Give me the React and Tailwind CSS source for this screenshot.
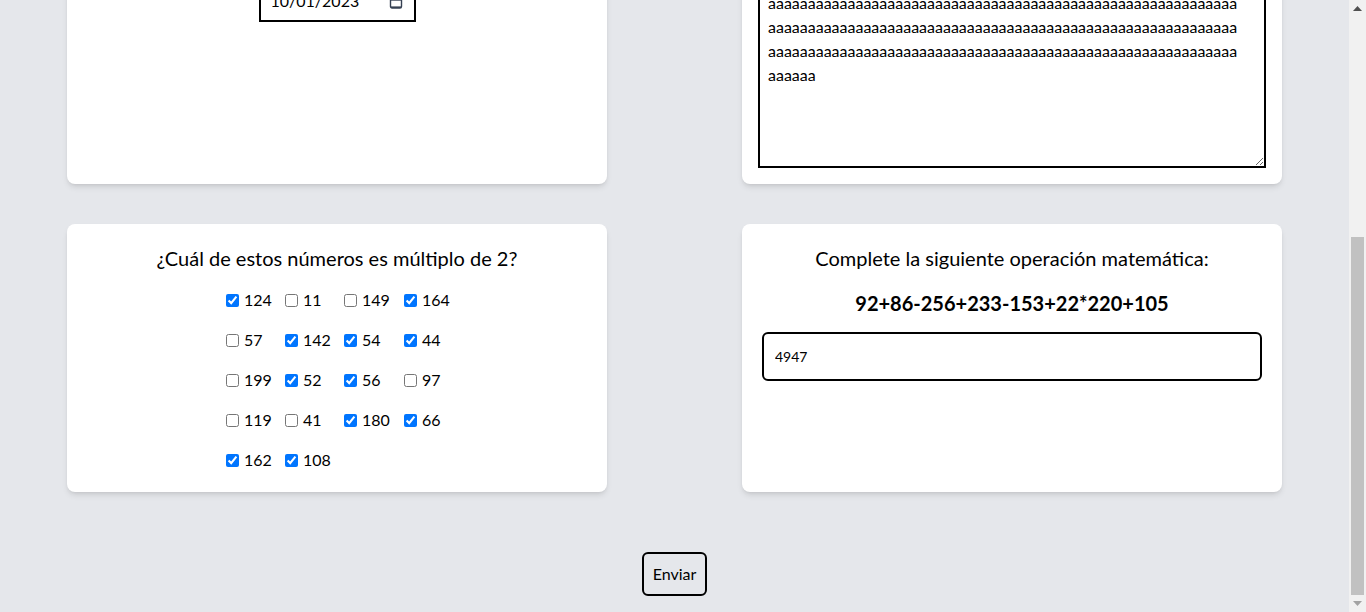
import React from 'react'

const numbers = [
  [124, true], [11, false], [149, false], [164, true],
  [57, false], [142, true], [54, true], [44, true],
  [199, false], [52, true], [56, true], [97, false],
  [119, false], [41, false], [180, true], [66, true],
  [162, true], [108, true],
]

const fullLine = 'a'.repeat(59)
const essay = [fullLine, fullLine, fullLine, fullLine, fullLine, fullLine, 'aaaaaa'].join('\n')

function CalendarIcon() {
  return (
    <svg width="14" height="15" viewBox="0 0 14 15" className="text-gray-700">
      <rect x="1.5" y="2.5" width="11" height="11.5" rx="1.5" fill="none" stroke="currentColor" strokeWidth="1.4" />
      <line x1="1.5" y1="6" x2="12.5" y2="6" stroke="currentColor" strokeWidth="1.4" />
      <line x1="2" y1="13.2" x2="12" y2="13.2" stroke="currentColor" strokeWidth="1.6" />
    </svg>
  )
}

function Scrollbar() {
  return (
    <div className="w-[17px] h-[612px] bg-[#f1f1f1] flex flex-col items-center shrink-0">
      <div className="h-[17px] w-full flex items-center justify-center">
        <svg width="9" height="5" viewBox="0 0 9 5"><polygon points="0,5 4.5,0 9,5" fill="#505050" /></svg>
      </div>
      <div className="flex-1 w-full flex flex-col justify-end px-[2px]">
        <div className="h-[358px] w-full bg-[#c1c1c1]" />
      </div>
      <div className="h-[17px] w-full flex items-center justify-center">
        <svg width="9" height="5" viewBox="0 0 9 5"><polygon points="0,0 9,0 4.5,5" fill="#a3a3a3" /></svg>
      </div>
    </div>
  )
}

export default function App() {
  return (
    <div className="flex h-[612px] overflow-hidden bg-[#e5e7eb] text-black" style={{ fontFamily: 'Lato, "Noto Sans", sans-serif' }}>
      <div className="w-[1349px] shrink-0 px-[67px]">
        <div className="-mt-[107px] grid grid-cols-2 gap-x-[135px] gap-y-10">
          {/* fecha */}
          <div className="bg-white rounded-lg shadow-md flex flex-col items-center pt-[87px]">
            <div className="w-[157px] h-[42px] border-2 border-black flex items-center justify-between pl-[10px] pr-[11px]">
              <span className="text-base">10/01/2023</span>
              <CalendarIcon />
            </div>
          </div>

          {/* texto */}
          <div className="bg-white rounded-lg shadow-md p-4">
            <textarea
              readOnly
              value={essay}
              className="block w-full h-[259px] border-2 border-black px-2 py-2 text-base leading-6 outline-none resize-y"
            />
          </div>

          {/* multiplos */}
          <div className="bg-white rounded-lg shadow-md pt-5 pb-5 flex flex-col items-center">
            <h3 className="text-xl leading-7 mb-4">¿Cuál de estos números es múltiplo de 2?</h3>
            <div className="grid grid-cols-[59px_59px_60px_44px] gap-y-4">
              {numbers.map(([n, checked]) => (
                <label key={n} className="flex items-center h-6 text-base">
                  <input type="checkbox" defaultChecked={checked} className="m-0 w-[13px] h-[13px]" />
                  <span className="ml-[5px]">{n}</span>
                </label>
              ))}
            </div>
          </div>

          {/* operacion */}
          <div className="bg-white rounded-lg shadow-md pt-5 px-5 flex flex-col items-center">
            <h3 className="text-xl leading-7 mb-[17px]">Complete la siguiente operación matemática:</h3>
            <p className="text-xl leading-7 font-bold mb-[15px]">92+86-256+233-153+22*220+105</p>
            <input
              readOnly
              value="4947"
              className="w-full h-[49px] border-2 border-black rounded-md pl-[11px] pr-3 text-sm outline-none"
            />
          </div>
        </div>

        <div className="flex justify-center mt-[60px]">
          <button className="border-2 border-black rounded-md px-[9px] py-2 text-base leading-6">Enviar</button>
        </div>
      </div>
      <Scrollbar />
    </div>
  )
}
